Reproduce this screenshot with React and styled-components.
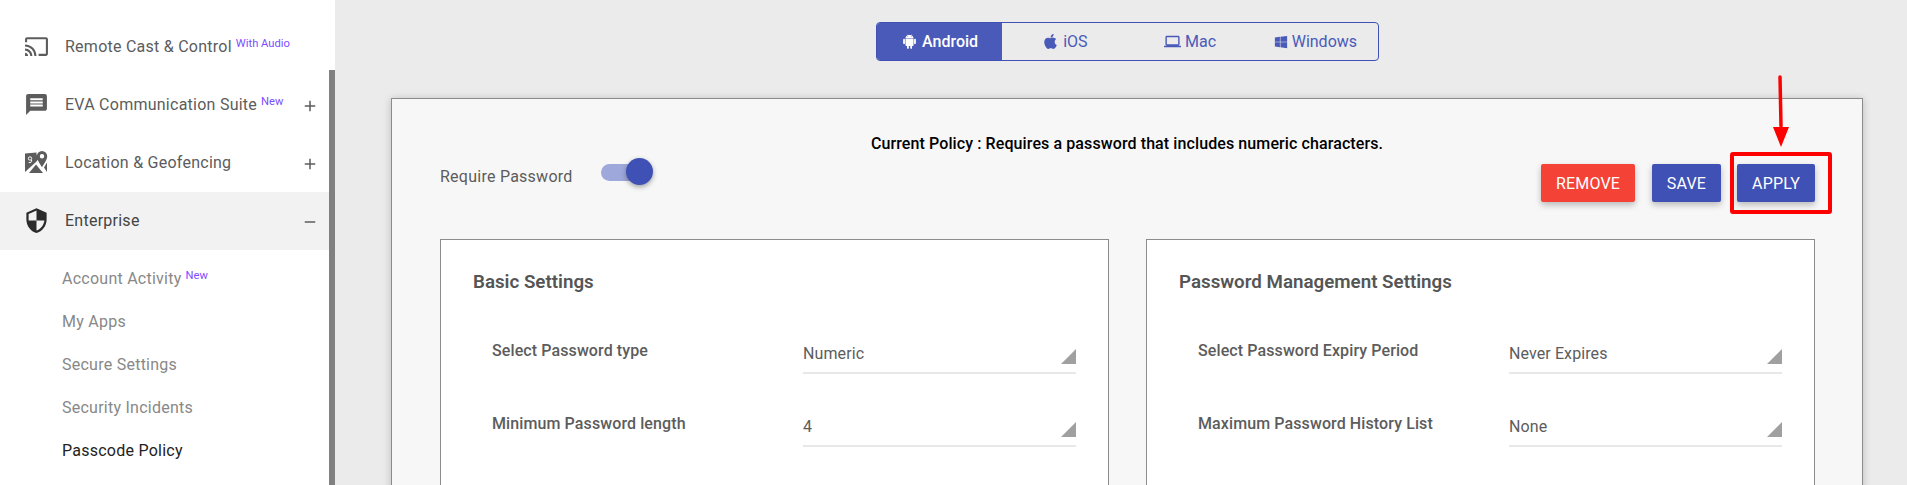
import React from "react";
import styled, {createGlobalStyle} from "styled-components";
import {MdCast, MdMessage, MdSecurity, MdAdd, MdRemove, MdOutlineLaptop} from "react-icons/md";
import {FaApple, FaWindows} from "react-icons/fa";
import {AiFillAndroid} from "react-icons/ai";

const Global = createGlobalStyle`
    html, body {
        margin: 0;
        height: 485px;
        overflow: hidden;
        background: #ebebeb;
        font-family: Roboto, "Liberation Sans", sans-serif;
    }
    * { box-sizing: border-box; }
`

const Page = styled.div`
    display: flex;
    position: relative;
    width: 1907px;
    height: 485px;
    overflow: hidden;
`

/* sidebar */
const Sidebar = styled.aside`
    position: relative;
    flex: 0 0 335px;
    background: white;
    padding-top: 18px;
`
const ScrollThumb = styled.div`
    position: absolute;
    top: 70px;
    right: 0;
    bottom: 0;
    width: 6px;
    background: #808080;
`
const NavRow = styled.div`
    display: flex;
    align-items: center;
    height: 58px;
    padding: 0 16px 2px 24px;
    color: ${p => p.$active ? "#444" : "#5c5c5c"};
    background: ${p => p.$active ? "#f2f2f2" : "transparent"};
    font-size: 16px;
    letter-spacing: 0.25px;
`
const NavIcon = styled.span`
    display: flex;
    justify-content: center;
    width: 24px;
    min-width: 0;
    flex-shrink: 0;
    margin-right: 17px;
    color: ${p => p.$dark ? "#2b2b2b" : "#5c5c5c"};
    font-size: ${p => p.$dark ? 27 : 25}px;
    & > svg { flex-shrink: 0; }
`
const NavLabel = styled.span`
    flex: 1;
    white-space: nowrap;
`
const Badge = styled.sup`
    margin-left: 4px;
    color: #7c4dff;
    font-size: 11.2px;
    letter-spacing: 0;
    line-height: 0;
    vertical-align: 5px;
`
const Toggle = styled.span`
    display: flex;
    color: #5c5c5c;
    font-size: 18px;
    margin-top: 3px;
`
const SubList = styled.div`
    padding: 7px 0 0 62px;
`
const SubItem = styled.div`
    height: 43px;
    line-height: 43px;
    font-size: 16px;
    letter-spacing: 0.25px;
    color: ${p => p.$current ? "#222" : "#888"};
`

/* main area */
const Main = styled.main`
    flex: 1;
    min-width: 0;
    padding: 22px 44px 0 56px;
`
const Tabs = styled.div`
    display: flex;
    width: 503px;
    height: 39px;
    margin: 0 0 37px 485px;
    border: 1px solid #3f51b5;
    border-radius: 4px;
    overflow: hidden;
`
const Tab = styled.div`
    flex: 1;
    display: flex;
    align-items: center;
    justify-content: center;
    gap: 4px;
    font-size: 16px;
    font-weight: ${p => p.$active ? 500 : 400};
    color: ${p => p.$active ? "white" : "#4a5ab9"};
    background: ${p => p.$active ? "#4a5ab9" : "transparent"};
`
const Card = styled.section`
    height: 500px;
    padding: 35px 48px 0;
    background: #f7f7f7;
    border: 1px solid #8c8c8c;
    box-shadow: 0 1px 8px rgba(0, 0, 0, 0.2);
`
const Policy = styled.div`
    height: 20px;
    line-height: 20px;
    text-align: center;
    font-size: 16px;
    letter-spacing: 0.1px;
    font-weight: 500;
    color: #000;
`
const HeadRow = styled.div`
    display: flex;
    justify-content: space-between;
    height: 85px;
`
const RequireGroup = styled.div`
    display: flex;
    margin-top: 4px;
`
const RequireLabel = styled.span`
    width: 161px;
    margin-top: 9px;
    font-size: 16px;
    letter-spacing: 0.25px;
    color: #5c5c5c;
`
const Track = styled.span`
    position: relative;
    width: 39px;
    height: 17px;
    margin-top: 6px;
    border-radius: 9px;
    background: #9fa8da;
`
const Knob = styled.span`
    position: absolute;
    top: -6px;
    left: 25px;
    width: 27px;
    height: 27px;
    border-radius: 50%;
    background: #3f51b5;
    box-shadow: 0 2px 5px rgba(0, 0, 0, 0.35);
`
const Buttons = styled.div`
    display: flex;
    gap: 16px;
    margin: 10px -1px 0 0;
`
const Button = styled.button`
    height: 38px;
    width: ${p => p.$w}px;
    margin-right: ${p => p.$red ? 1 : 0}px;
    border: none;
    border-radius: 2px;
    color: white;
    background: ${p => p.$red ? "#f44336" : "#3f51b5"};
    font: 400 16px Roboto, sans-serif;
    letter-spacing: 0.2px;
    box-shadow: 0 3px 6px rgba(0, 0, 0, 0.25);
`
const Panels = styled.div`
    display: grid;
    grid-template-columns: 669px 669px;
    gap: 37px;
`
const Panel = styled.div`
    height: 400px;
    padding: 31px 33px 0 32px;
    background: white;
    border: 1px solid #8c8c8c;
`
const PanelTitle = styled.h3`
    margin: 0 0 8px;
    font-size: 18.75px;
    line-height: 22px;
    font-weight: 600;
    color: #555;
`
const Row = styled.div`
    display: grid;
    grid-template-columns: 311px 273px;
    height: 73px;
    padding-left: 19px;
`
const FieldLabel = styled.div`
    padding-top: 40px;
    font-size: 16px;
    letter-spacing: 0.1px;
    line-height: 20px;
    font-weight: 500;
    color: #5c5c5c;
`
const Select = styled.div`
    position: relative;
    height: 73px;
    padding-top: 43px;
    font-size: 16px;
    letter-spacing: 0.1px;
    line-height: 20px;
    color: #5c5c5c;
    border-bottom: 2px solid #e8e8e8;
    &::after {
        content: "";
        position: absolute;
        right: 0;
        bottom: 8px;
        border-style: solid;
        border-width: 0 0 15px 15px;
        border-color: transparent transparent #a0a0a0 transparent;
    }
`

/* red annotation drawn on top of the screenshot */
const Annotation = styled.svg`
    position: absolute;
    left: 1725px;
    top: 70px;
    pointer-events: none;
`

const MapPinIcon = () => (
    <svg width="24" height="24" viewBox="0 0 24 24" fill="#5c5c5c">
        <path d="M1 3.500 12.500 2.500c-.3 2 .6 4 2 6.500L12 12 1 22z"/>
        <path fillRule="evenodd" d="M18 1a5.200 5.200 0 0 1 5.200 5.200c0 3.200-3 7.300-5.200 11-2.200-3.700-5.200-7.800-5.200-11A5.200 5.200 0 0 1 18 1zm0 3a2.200 2.200 0 1 0 0 4.400A2.200 2.200 0 0 0 18 4z"/>
        <path d="M20 17.500l3-5V22z"/>
        <path d="M5 23l7-8.500 7 8.500z"/>
        <circle cx="6" cy="8.500" r="1.700" fill="none" stroke="#fff" strokeWidth="1"/>
        <path d="M7.500 10c.8 2-1 3-2.800 2.500" fill="none" stroke="#fff" strokeWidth="1"/>
    </svg>
);

const rows = {
    basic: [["Select Password type", "Numeric"], ["Minimum Password length", "4"]],
    manage: [["Select Password Expiry Period", "Never Expires"], ["Maximum Password History List", "None"]],
};

const Fields = ({items}) => items.map(([label, value]) => (
    <Row key={label}>
        <FieldLabel>{label}</FieldLabel>
        <Select>{value}</Select>
    </Row>
));

const App = () => {
    return <Page>
        <Global/>
        <Sidebar>
            <ScrollThumb/>
            <NavRow>
                <NavIcon><MdCast/></NavIcon>
                <NavLabel>Remote Cast &amp; Control<Badge>With Audio</Badge></NavLabel>
            </NavRow>
            <NavRow>
                <NavIcon><MdMessage/></NavIcon>
                <NavLabel>EVA Communication Suite<Badge>New</Badge></NavLabel>
                <Toggle><MdAdd/></Toggle>
            </NavRow>
            <NavRow>
                <NavIcon><MapPinIcon/></NavIcon>
                <NavLabel>Location &amp; Geofencing</NavLabel>
                <Toggle><MdAdd/></Toggle>
            </NavRow>
            <NavRow $active>
                <NavIcon $dark><MdSecurity/></NavIcon>
                <NavLabel>Enterprise</NavLabel>
                <Toggle><MdRemove/></Toggle>
            </NavRow>
            <SubList>
                <SubItem>Account Activity<Badge>New</Badge></SubItem>
                <SubItem>My Apps</SubItem>
                <SubItem>Secure Settings</SubItem>
                <SubItem>Security Incidents</SubItem>
                <SubItem $current>Passcode Policy</SubItem>
            </SubList>
        </Sidebar>
        <Main>
            <Tabs>
                <Tab $active><AiFillAndroid size={17}/>Android</Tab>
                <Tab><FaApple size={17}/>iOS</Tab>
                <Tab><MdOutlineLaptop size={17}/>Mac</Tab>
                <Tab><FaWindows size={14}/>Windows</Tab>
            </Tabs>
            <Card>
                <Policy>Current Policy : Requires a password that includes numeric characters.</Policy>
                <HeadRow>
                    <RequireGroup>
                        <RequireLabel>Require Password</RequireLabel>
                        <Track><Knob/></Track>
                    </RequireGroup>
                    <Buttons>
                        <Button $red $w={94}>REMOVE</Button>
                        <Button $w={69}>SAVE</Button>
                        <Button $w={78}>APPLY</Button>
                    </Buttons>
                </HeadRow>
                <Panels>
                    <Panel>
                        <PanelTitle>Basic Settings</PanelTitle>
                        <Fields items={rows.basic}/>
                    </Panel>
                    <Panel>
                        <PanelTitle>Password Management Settings</PanelTitle>
                        <Fields items={rows.manage}/>
                    </Panel>
                </Panels>
            </Card>
        </Main>
        <Annotation width="112" height="150" viewBox="0 0 112 150">
            <rect x="7" y="84" width="98" height="58" fill="none" stroke="#f00" strokeWidth="4" rx="1"/>
            <path d="M55 7L56 56" stroke="#f00" strokeWidth="3.500" strokeLinecap="round"/>
            <path d="M48 57h16l-8 20z" fill="#f00"/>
        </Annotation>
    </Page>
}

export default App;
